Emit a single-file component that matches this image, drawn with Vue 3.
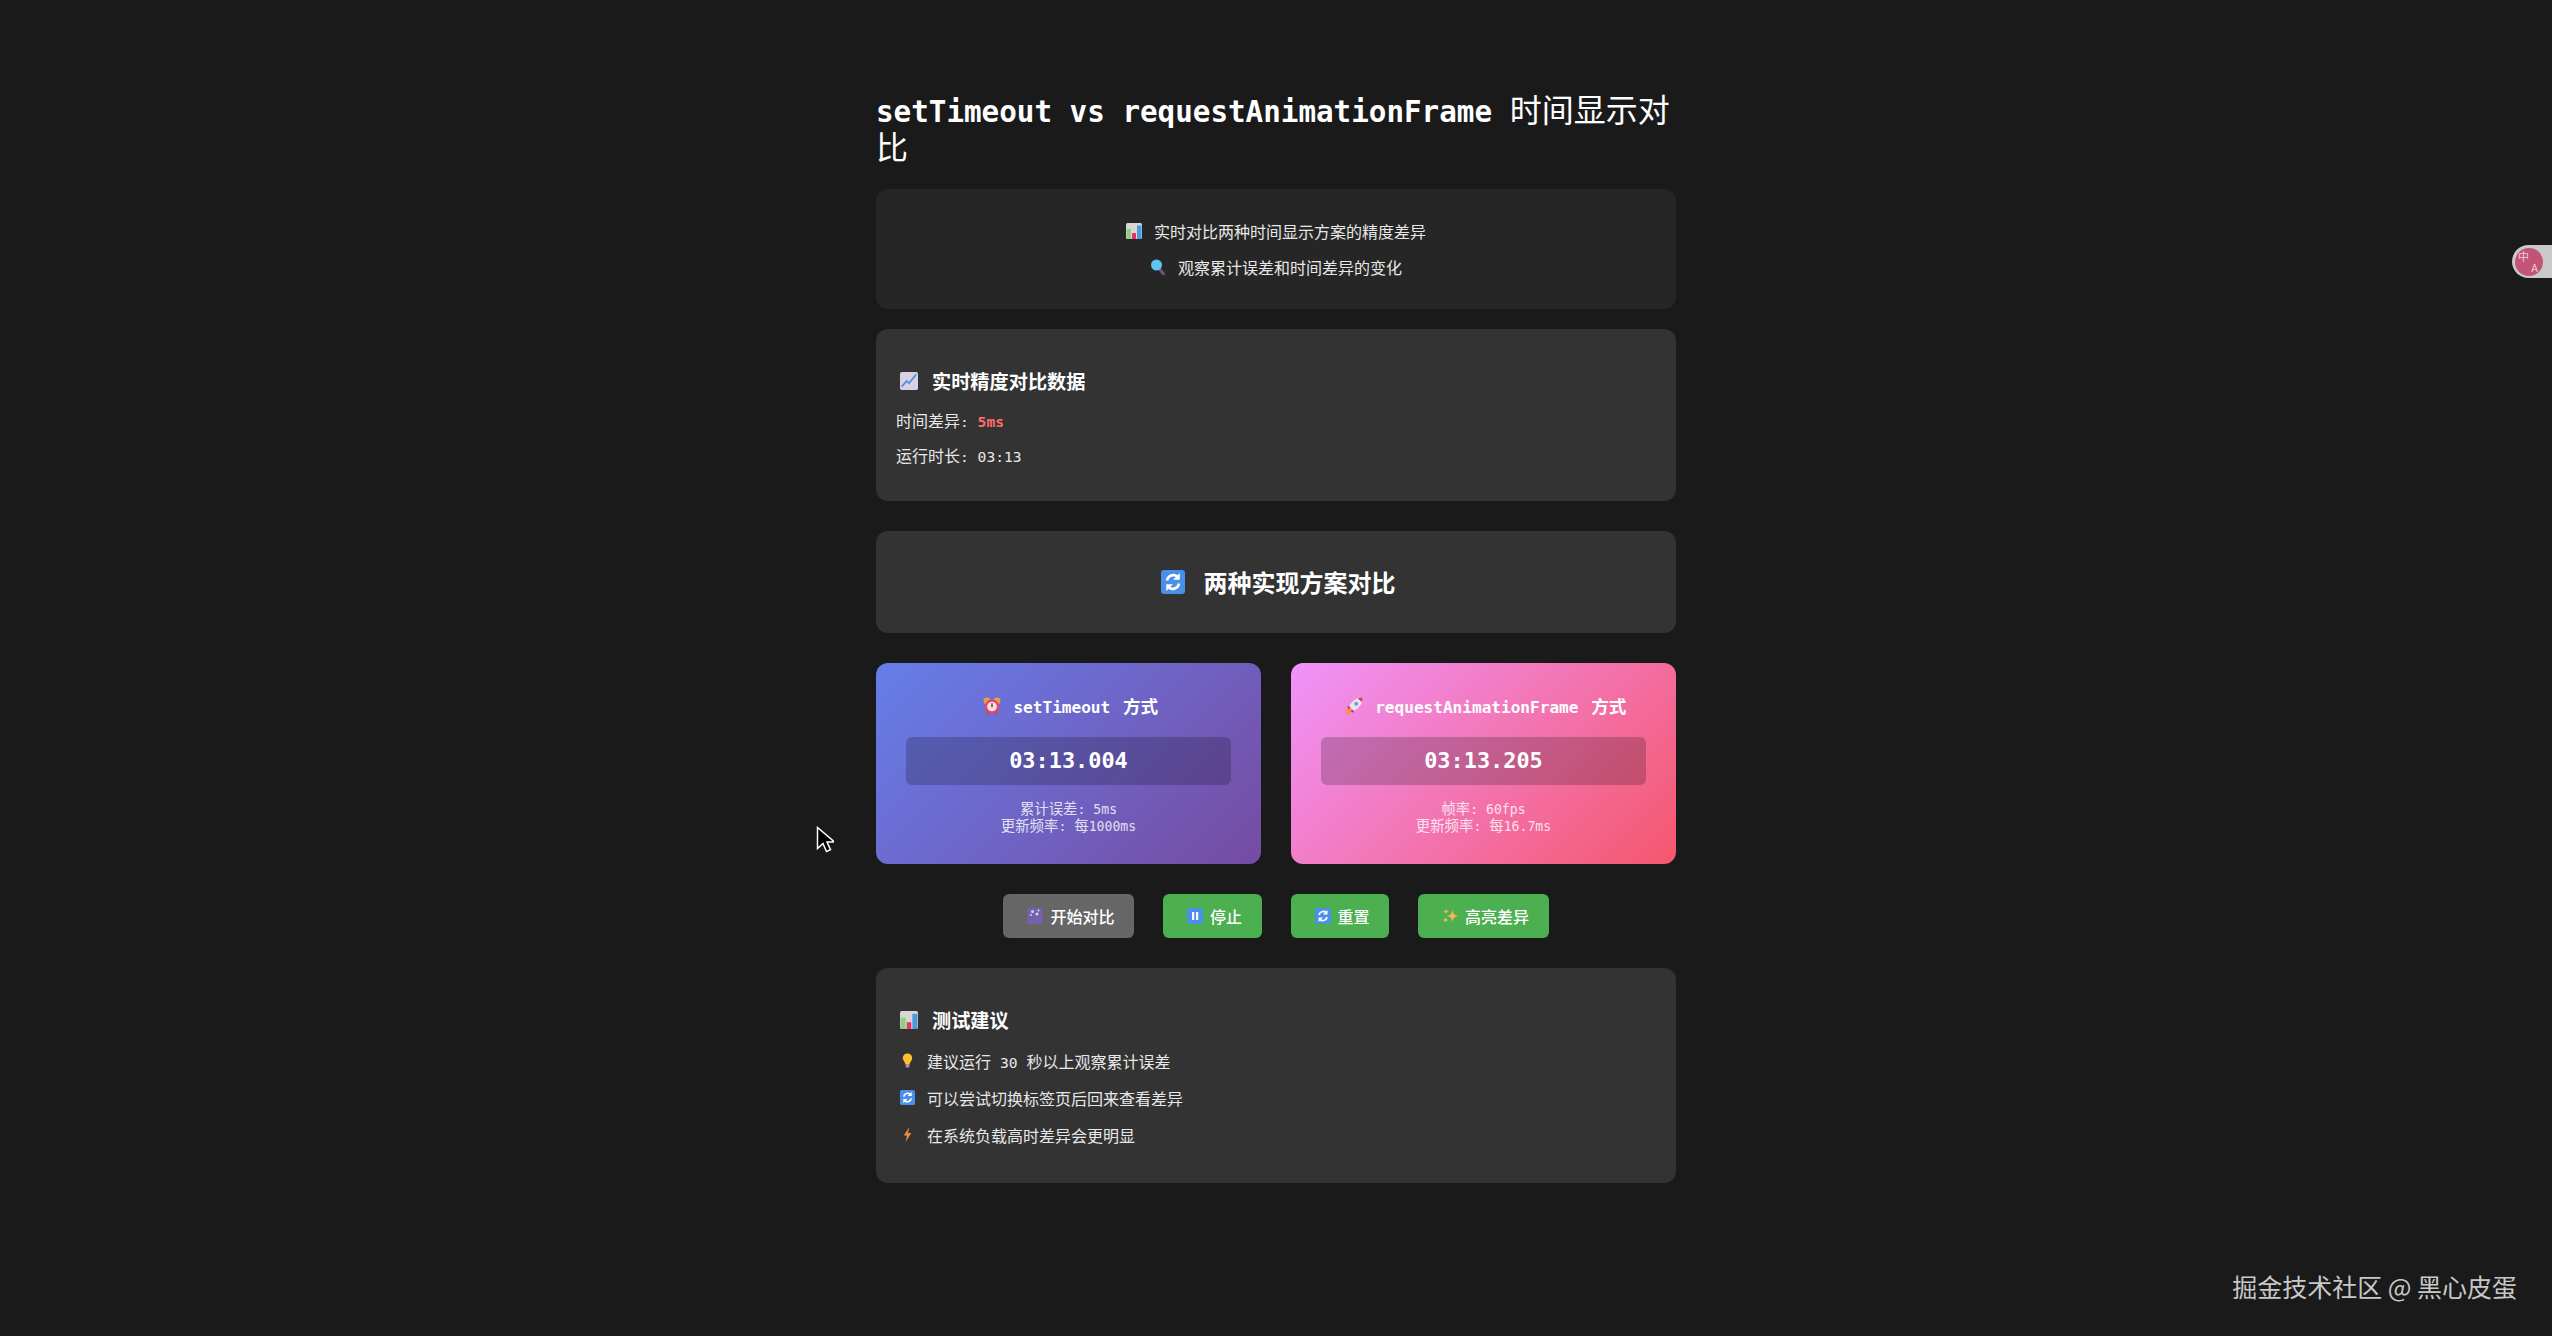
<script setup>
const topNotes = [
  { icon: "chart", text: "实时对比两种时间显示方案的精度差异" },
  { icon: "lens", text: "观察累计误差和时间差异的变化" },
];

const buttons = [
  { icon: "clapper", label: "开始对比", off: true },
  { icon: "pause", label: "停止" },
  { icon: "refresh", label: "重置" },
  { icon: "sparkle", label: "高亮差异" },
];
</script>

<template>
  <div class="page">
    <svg class="sprites" aria-hidden="true">
      <symbol id="chart" viewBox="0 0 32 32">
        <rect width="32" height="32" rx="3" fill="#d9d6d6" />
        <rect x="1" y="12" width="9" height="20" fill="#8fd07c" />
        <rect x="12" y="20" width="8" height="12" fill="#e8306f" />
        <rect x="22" y="5" width="9" height="27" fill="#4d9ad8" />
      </symbol>
      <symbol id="trend" viewBox="0 0 32 32">
        <rect width="32" height="32" rx="3" fill="#d8d2e4" />
        <path d="M3 26 12 16l4 4L29 4" fill="none" stroke="#4a8fe0" stroke-width="3" />
      </symbol>
      <symbol id="refresh" viewBox="0 0 32 32">
        <rect width="32" height="32" rx="4" fill="#4a90e8" />
        <path d="M8 14a8.500 8.500 0 0 1 14-5" fill="none" stroke="#fff" stroke-width="3.400" />
        <path d="M25 4v9h-9z" fill="#fff" />
        <path d="M24 18a8.500 8.500 0 0 1-14 5" fill="none" stroke="#fff" stroke-width="3.400" />
        <path d="M7 28v-9h9z" fill="#fff" />
      </symbol>
      <symbol id="lens" viewBox="0 0 32 32">
        <path d="m19 20 8 10" stroke="#7a4a86" stroke-width="6" stroke-linecap="round" />
        <circle cx="13" cy="12" r="11" fill="#5cc6ee" />
      </symbol>
      <symbol id="clock" viewBox="0 0 32 32">
        <circle cx="7" cy="7" r="6" fill="#e9a04c" />
        <circle cx="25" cy="7" r="6" fill="#e9a04c" />
        <path d="m6 31 4-5m16 5-4-5" stroke="#c9405a" stroke-width="3" />
        <circle cx="16" cy="17" r="13" fill="#e8466a" />
        <circle cx="16" cy="17" r="8.500" fill="#f6e4e4" />
        <path d="M16 11v7" fill="none" stroke="#444" stroke-width="2.500" />
      </symbol>
      <symbol id="rocket" viewBox="0 0 32 32">
        <path d="M2 31c-2-5 0-9 4-11l6 6c-2 3-5 5-10 5z" fill="#f39a32" />
        <path d="m4 17 9-4-6 10zM15 28l4-9-10 6z" fill="#e2344f" />
        <path d="M31 1c1 9-3 16-15 24l-9-9C15 5 22 1 31 1z" fill="#e8e4ee" />
        <circle cx="20" cy="12" r="3.500" fill="#6f9be0" />
        <path d="M31 1c0 3 0 6-1 8l-7-6c2-1 5-2 8-2z" fill="#e2344f" />
      </symbol>
      <symbol id="clapper" viewBox="0 0 32 32">
        <rect x="1" width="30" height="32" rx="3" fill="#7560ad" />
        <circle cx="11" cy="7" r="3" fill="#d8cdee" />
        <circle cx="23" cy="5" r="2.200" fill="#d8cdee" />
        <circle cx="20" cy="12" r="3" fill="#d8cdee" />
        <circle cx="8" cy="14" r="2" fill="#d8cdee" />
      </symbol>
      <symbol id="pause" viewBox="0 0 32 32">
        <rect width="32" height="32" rx="4" fill="#4a90e8" />
        <rect x="10" y="8" width="4.500" height="16" fill="#fff" />
        <rect x="18" y="8" width="4.500" height="16" fill="#fff" />
      </symbol>
      <symbol id="sparkle" viewBox="0 0 32 32">
        <path d="M21 3c1 8 3 11 11 13-8 2-10 5-11 13-1-8-3-11-11-13 8-2 10-5 11-13z" fill="#f6b65a" />
        <path d="M8 1c.7 4 2 5 6 6-4 1-5.300 2-6 6-.7-4-2-5-6-6 4-1 5.300-2 6-6zM7 18c.7 4 2 5 6 6-4 1-5.300 2-6 6-.7-4-2-5-6-6 4-1 5.300-2 6-6z" fill="#eeb06a" />
      </symbol>
      <symbol id="bulb" viewBox="0 0 32 32">
        <path d="M16 1c7 0 10 5 10 10 0 5-5 8-6 14h-8c-1-6-6-9-6-14C6 6 9 1 16 1z" fill="#fbc02d" />
        <rect x="12" y="25" width="8" height="6" rx="1.500" fill="#a98cc4" />
      </symbol>
      <symbol id="bolt" viewBox="0 0 32 32">
        <path d="M20 0 8 18h7l-3 14 12-19h-7z" fill="#f08a3c" />
      </symbol>
    </svg>

    <main class="wrap">
      <h1 class="title"><span class="m">setTimeout vs requestAnimationFrame </span><span class="title-cn">时间显示对比</span></h1>

      <section class="notes">
        <p v-for="note in topNotes" :key="note.icon" class="note">
          <svg class="ico16"><use :href="'#' + note.icon" /></svg>
          <span>{{ note.text }}</span>
        </p>
      </section>

      <section class="panel stats">
        <h3 class="sub">
          <svg class="ico18"><use href="#trend" /></svg>
          <span>实时精度对比数据</span>
        </h3>
        <p class="stat">时间差异<span class="m">: </span><b class="m diff">5ms</b></p>
        <p class="stat">运行时长<span class="m">: 03:13</span></p>
      </section>

      <section class="panel heading">
        <svg class="ico24"><use href="#refresh" /></svg>
        <h2>两种实现方案对比</h2>
      </section>

      <section class="cards">
        <div class="card card-a">
          <h3 class="card-title">
            <svg class="ico18"><use href="#clock" /></svg>
            <span><span class="m">setTimeout </span>方式</span>
          </h3>
          <div class="m time">03:13.004</div>
          <div class="info">
            <div>累计误差<span class="m">: 5ms</span></div>
            <div>更新频率<span class="m">: </span>每<span class="m">1000ms</span></div>
          </div>
        </div>
        <div class="card card-b">
          <h3 class="card-title">
            <svg class="ico18"><use href="#rocket" /></svg>
            <span><span class="m">requestAnimationFrame </span>方式</span>
          </h3>
          <div class="m time">03:13.205</div>
          <div class="info">
            <div>帧率<span class="m">: 60fps</span></div>
            <div>更新频率<span class="m">: </span>每<span class="m">16.7ms</span></div>
          </div>
        </div>
      </section>

      <div class="actions">
        <button v-for="btn in buttons" :key="btn.label" class="btn" :class="{ off: btn.off }">
          <svg class="btn-ico"><use :href="'#' + btn.icon" /></svg>
          {{ btn.label }}
        </button>
      </div>

      <section class="panel tips">
        <h3 class="sub">
          <svg class="ico18"><use href="#chart" /></svg>
          <span>测试建议</span>
        </h3>
        <p class="tip"><svg class="ico15"><use href="#bulb" /></svg><span>建议运行<span class="m num">30</span>秒以上观察累计误差</span></p>
        <p class="tip"><svg class="ico15"><use href="#refresh" /></svg><span>可以尝试切换标签页后回来查看差异</span></p>
        <p class="tip"><svg class="ico15"><use href="#bolt" /></svg><span>在系统负载高时差异会更明显</span></p>
      </section>
    </main>

    <div class="translate">
      <div class="translate-dot"><span class="zh">中</span><span class="en">A</span></div>
    </div>

    <div class="watermark">掘金技术社区 @ 黑心皮蛋</div>

    <svg class="cursor" viewBox="0 0 18 27" width="18" height="27">
      <path d="M1.500 1.500v21l5.500-5 3.500 8 4-1.800-3.500-7.700h7.500z" fill="#000" stroke="#fff" stroke-width="1.500" />
    </svg>
  </div>
</template>

<style scoped>
.page {
  position: relative;
  height: 1336px;
  overflow: hidden;
  background: #1a1a1a;
  color: #fff;
  font-family: "Noto Sans CJK SC", "Noto Sans", sans-serif;
  font-size: 16px;
}
.sprites {
  position: absolute;
  width: 0;
  height: 0;
}
/* latin runs: mono font scaled down so the advance stays at 0.55em */
.m {
  font-family: "DejaVu Sans Mono", "Noto Sans CJK SC", monospace;
  font-size: 0.914em;
  line-height: 0;
}
.wrap {
  width: 800px;
  margin: 0 auto;
  padding-top: 90px;
}
.title {
  margin: 0 0 25px;
  font-size: 32px;
  line-height: 37px;
  font-weight: 700;
}
.title-cn {
  font-weight: 400;
}
.notes {
  display: flex;
  flex-direction: column;
  gap: 10px;
  padding: 28.5px 20px 29.5px;
  background: #262626;
  border-radius: 12px;
  margin-bottom: 20px;
}
.note {
  display: flex;
  justify-content: center;
  align-items: center;
  gap: 12px;
  margin: 0;
  line-height: 26px;
  color: #e8e8e8;
}
.panel {
  background: #333;
  border-radius: 12px;
}
.stats {
  padding: 38.5px 20px 34.5px;
  margin-bottom: 30px;
}
.sub {
  display: flex;
  align-items: center;
  gap: 14px;
  margin: 0 0 14px 4px;
  font-size: 19.2px;
  line-height: 26px;
  font-weight: 700;
}
.stat {
  margin: 0 0 11px;
  line-height: 24px;
  color: #e8e8e8;
}
.stat:last-child {
  margin-bottom: 0;
}
.diff {
  color: #ff6b6b;
  font-weight: 700;
}
.heading {
  display: flex;
  justify-content: center;
  align-items: center;
  gap: 19px;
  padding: 34px 20px 34px 24px;
  margin-bottom: 30px;
}
.heading h2 {
  margin: 0;
  font-size: 24px;
  line-height: 34px;
  font-weight: 700;
}
.cards {
  display: grid;
  grid-template-columns: 1fr 1fr;
  gap: 30px;
  margin-bottom: 30px;
}
.card {
  padding: 30px 30px 31.5px;
  border-radius: 12px;
  text-align: center;
}
.card-a {
  background: linear-gradient(135deg, #667eea 0%, #764ba2 100%);
}
.card-b {
  background: linear-gradient(135deg, #f093fb 0%, #f5576c 100%);
}
.card-title {
  display: flex;
  justify-content: center;
  align-items: center;
  gap: 12.5px;
  margin: 0 0 18px 4px;
  font-size: 17.6px;
  line-height: 26px;
  font-weight: 700;
}
.card-title .m {
  margin-right: 3px;
}
.time {
  height: 48px;
  line-height: 48px;
  margin-bottom: 13.5px;
  background: rgba(0, 0, 0, 0.2);
  border-radius: 6px;
  font-size: 21.9px;
  font-weight: 700;
}
.info {
  font-size: 14.4px;
  line-height: 17px;
  opacity: 0.8;
}
.actions {
  display: flex;
  justify-content: center;
  gap: 29px;
  margin-bottom: 30px;
}
.btn {
  display: flex;
  align-items: center;
  height: 44px;
  padding: 0 19.5px 0 20px;
  border: 0;
  border-radius: 6px;
  background: #4caf50;
  color: #fff;
  font-family: inherit;
  font-size: 16px;
  font-weight: 500;
}
.btn.off {
  background: #666;
}
.btn-ico {
  width: 16px;
  height: 16px;
  margin: 0 7px 0 4px;
}
.tips {
  padding: 38.5px 20px 36px;
}
.tips .sub {
  margin-bottom: 16px;
}
.tip {
  display: flex;
  align-items: center;
  margin: 0 0 13px 4px;
  line-height: 24px;
  color: #e8e8e8;
}
.tip:last-child {
  margin-bottom: 0;
}
.num {
  padding: 0 9px;
}
.ico15 {
  width: 15px;
  height: 15px;
  margin-right: 12px;
}
.ico16 {
  width: 16px;
  height: 16px;
}
.ico18 {
  width: 18px;
  height: 18px;
}
.ico24 {
  width: 24px;
  height: 24px;
}
.translate {
  position: absolute;
  top: 245px;
  right: 0;
  width: 40px;
  height: 33px;
  padding: 2.5px 0 0 3px;
  box-sizing: border-box;
  background: #c9c9c9;
  border-radius: 17px 0 0 17px;
}
.translate-dot {
  display: grid;
  grid-template-columns: 1fr 1fr;
  grid-template-rows: 1fr 1fr;
  align-items: center;
  justify-items: center;
  width: 28px;
  height: 28px;
  padding: 3px;
  box-sizing: border-box;
  border-radius: 50%;
  background: #c25577;
  color: #f0cdd8;
  font-size: 11px;
  line-height: 1;
}
.translate-dot .en {
  grid-column: 2;
  grid-row: 2;
}
.watermark {
  position: absolute;
  right: 35px;
  top: 1268px;
  font-size: 25px;
  line-height: 36px;
  color: #c8c8c8;
}
.cursor {
  position: absolute;
  left: 816px;
  top: 826px;
}
</style>
